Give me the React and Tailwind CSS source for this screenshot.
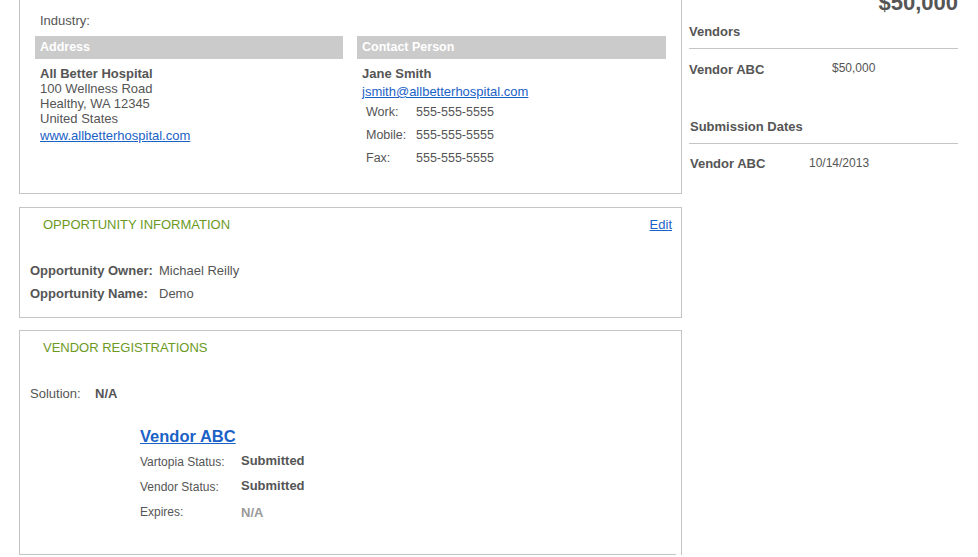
import React from 'react';

const font = { fontFamily: '"Liberation Sans", Arial, sans-serif' };

const SectionBar = ({ children }) => (
  <div className="h-[23px] bg-[#cbcbcb] px-[5px] text-[12.5px] font-bold leading-[23px] text-white">{children}</div>
);

const ContactRow = ({ label, value }) => (
  <div className="flex h-[23px] items-center pl-[9px] text-[12.5px]">
    <span className="w-[50px]">{label}</span>
    <span>{value}</span>
  </div>
);

const StatusRow = ({ label, value, muted }) => (
  <div className="flex h-[25px] items-center text-[12px]">
    <span className="w-[101px]">{label}</span>
    <span className={`text-[13px] font-bold ${muted ? 'mt-[2px] text-[#9a9a9a]' : '-mt-[2px] text-[#555]'}`}>{value}</span>
  </div>
);

export default function App() {
  return (
    <div style={font} className="h-[557px] w-[978px] overflow-hidden bg-white text-[#555]">
      <div className="flex gap-[7px] pl-[19px]">
        {/* main column */}
        <div className="w-[663px]">
          {/* company box (top scrolled off) */}
          <div className="border-x border-b border-[#c4c4c4] px-[15px] pb-[23px] pt-[13px]">
            <div className="mb-[8px] pl-[5px] text-[13px] leading-[15px]">Industry:</div>
            <div className="grid grid-cols-[308px_309px] gap-[14px]">
              <div>
                <SectionBar>Address</SectionBar>
                <div className="mt-[7px] pl-[5px] text-[13px] leading-[15px]">
                  <div className="font-bold">All Better Hospital</div>
                  <div>100 Wellness Road</div>
                  <div>Healthy, WA 12345</div>
                  <div>United States</div>
                  <a href="#" className="mt-[2px] block text-[#1a62c6] underline">www.allbetterhospital.com</a>
                </div>
              </div>
              <div>
                <SectionBar>Contact Person</SectionBar>
                <div className="mt-[7px] pl-[5px] text-[13px] leading-[15px]">
                  <div className="font-bold">Jane Smith</div>
                  <a href="#" className="mt-[3px] block text-[#1a62c6] underline">jsmith@allbetterhospital.com</a>
                </div>
                <div className="mt-[2px]">
                  <ContactRow label="Work:" value="555-555-5555" />
                  <ContactRow label="Mobile:" value="555-555-5555" />
                  <ContactRow label="Fax:" value="555-555-5555" />
                </div>
              </div>
            </div>
          </div>

          {/* opportunity information */}
          <div className="mt-[13px] border border-[#c4c4c4] pb-[12px] pl-[10px] pr-[9px] pt-[9px]">
            <div className="flex items-center justify-between text-[13px] leading-[15px]">
              <span className="ml-[13px] text-[#6c9a1f]">OPPORTUNITY INFORMATION</span>
              <a href="#" className="text-[#1a62c6] underline">Edit</a>
            </div>
            <div className="mt-[27px] text-[13px]">
              <div className="flex h-[23px] items-center">
                <span className="w-[129px] font-bold">Opportunity Owner:</span>
                <span>Michael Reilly</span>
              </div>
              <div className="flex h-[23px] items-center">
                <span className="w-[129px] font-bold">Opportunity Name:</span>
                <span>Demo</span>
              </div>
            </div>
          </div>

          {/* vendor registrations */}
          <div className="mt-[12px] border-l border-r border-t border-[#c4c4c4] pr-[5px] pt-[9px]">
            <div className="ml-[23px] text-[13px] leading-[15px] text-[#6c9a1f]">VENDOR REGISTRATIONS</div>
            <div className="ml-[10px] mt-[31px] flex items-center text-[13px] leading-[15px]">
              <span className="w-[65px]">Solution:</span>
              <span className="font-bold">N/A</span>
            </div>
            <div className="ml-[120px] mt-[24px]">
              <a href="#" className="text-[16.5px] font-bold leading-[20px] text-[#1a62c6] underline">Vendor ABC</a>
              <div>
                <StatusRow label="Vartopia Status:" value="Submitted" />
                <StatusRow label="Vendor Status:" value="Submitted" />
                <StatusRow label="Expires:" value="N/A" muted />
              </div>
            </div>
            <div className="mt-[30px] border-b border-[#c4c4c4]"></div>
          </div>
        </div>

        {/* right column */}
        <div className="w-[269px] pt-[1px]">
          <div className="-mt-[11px] text-right text-[22px] font-bold leading-[25px]">$50,000</div>
          <div className="mt-[9px] border-b border-[#c4c4c4] pb-[9px] text-[13px] font-bold leading-[15px]">Vendors</div>
          <div className="mt-[13px] flex text-[13px] leading-[15px]">
            <span className="w-[143px] font-bold">Vendor ABC</span>
            <span className="-mt-[1px] text-[12px]">$50,000</span>
          </div>
          <div className="mt-[42px] border-b border-[#c4c4c4] pb-[9px] pl-[1px] text-[13px] font-bold leading-[15px]">Submission Dates</div>
          <div className="mt-[12px] flex pl-[1px] text-[13px] leading-[15px]">
            <span className="w-[119px] font-bold">Vendor ABC</span>
            <span className="text-[12px]">10/14/2013</span>
          </div>
        </div>
      </div>
    </div>
  );
}
